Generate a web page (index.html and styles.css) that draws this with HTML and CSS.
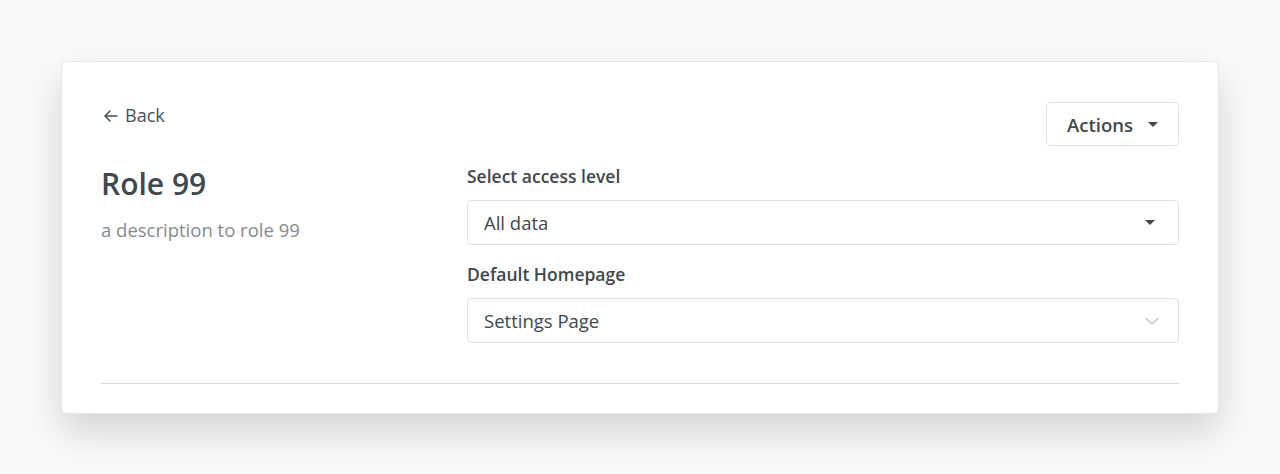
FILE: index.html
```html
<!DOCTYPE html>
<html>
<head>
<meta charset="utf-8">
<link rel="stylesheet" href="styles.css">
</head>
<body>
<div class="page">
  <div class="card">
    <div class="top">
      <a class="back" href="#"><svg class="back-icon" viewBox="0 0 14 12" width="14" height="12"><path d="M6 1L1 6l5 5M1 6h12" fill="none" stroke="currentColor" stroke-width="1.5" stroke-linecap="round" stroke-linejoin="round"/></svg>Back</a>
      <button class="actions">Actions <span class="caret"></span></button>
    </div>
    <div class="body">
      <div class="info">
        <h1 class="title">Role 99</h1>
        <p class="desc">a description to role 99</p>
      </div>
      <div class="form">
        <div class="field">
          <label class="label">Select access level</label>
          <div class="select">All data<span class="caret"></span></div>
        </div>
        <div class="field">
          <label class="label">Default Homepage</label>
          <div class="select">Settings Page<svg class="chev" viewBox="0 0 16 10" width="16" height="10"><path d="M1.5 2l6.5 6 6.5-6" fill="none" stroke="#c3c6c9" stroke-width="1.5"/></svg></div>
        </div>
      </div>
    </div>
    <div class="divider"></div>
  </div>
</div>
</body>
</html>
```
FILE: styles.css
```css
html, body { margin: 0; padding: 0; }
html { background: #fafafa; }
body {
  font-family: "Open Sans", "Liberation Sans", sans-serif;
  color: #41474d;
  min-height: 474px;
}
.page { padding: 61px 61px 60px 61px; }
.card {
  background: #fff;
  border: 1px solid #e6e6e6;
  border-radius: 5px;
  box-shadow: 0 18px 40px rgba(0,0,0,0.16);
  padding: 40px 39px 29px 39px;
}
.top { display: flex; justify-content: space-between; align-items: flex-start; }
.back {
  display: flex; align-items: center; gap: 7px;
  font-size: 18px; color: #4a5056; text-decoration: none;
  line-height: 27px;
}
.back-icon { margin-left: 3px; }
.actions {
  font-family: inherit; font-size: 18.5px; font-weight: 600; color: #41474d;
  background: #fff; border: 1px solid #e2e2e2; border-radius: 4px;
  height: 44px; width: 133px; padding: 0 20px;
  display: flex; align-items: center; justify-content: space-between;
}
.caret {
  display: inline-block; width: 0; height: 0;
  border-left: 5.5px solid transparent; border-right: 5.5px solid transparent;
  border-top: 5.5px solid #41474d;
}
.body { display: grid; grid-template-columns: 366px 1fr; margin-top: 18px; }
.title { margin: 0; font-size: 30px; font-weight: 600; line-height: 40px; color: #41474d; }
.desc { margin: 12px 0 0; font-size: 18.5px; color: #85898d; line-height: 27px; }
.form { display: flex; flex-direction: column; gap: 17px; }
.label { display: block; font-size: 17.5px; font-weight: 600; color: #41474d; line-height: 24px; margin-bottom: 12px; }
.select {
  height: 45px; box-sizing: border-box;
  border: 1px solid #e2e2e2; border-radius: 4px;
  display: flex; align-items: center; justify-content: space-between;
  padding: 0 22px 0 16px; font-size: 18.5px; color: #41474d;
}
.select .caret { margin-right: 1px; }
.chev { margin-right: -4px; }
.divider { border-top: 1px solid #d8d8d8; margin-top: 40px; }
```
